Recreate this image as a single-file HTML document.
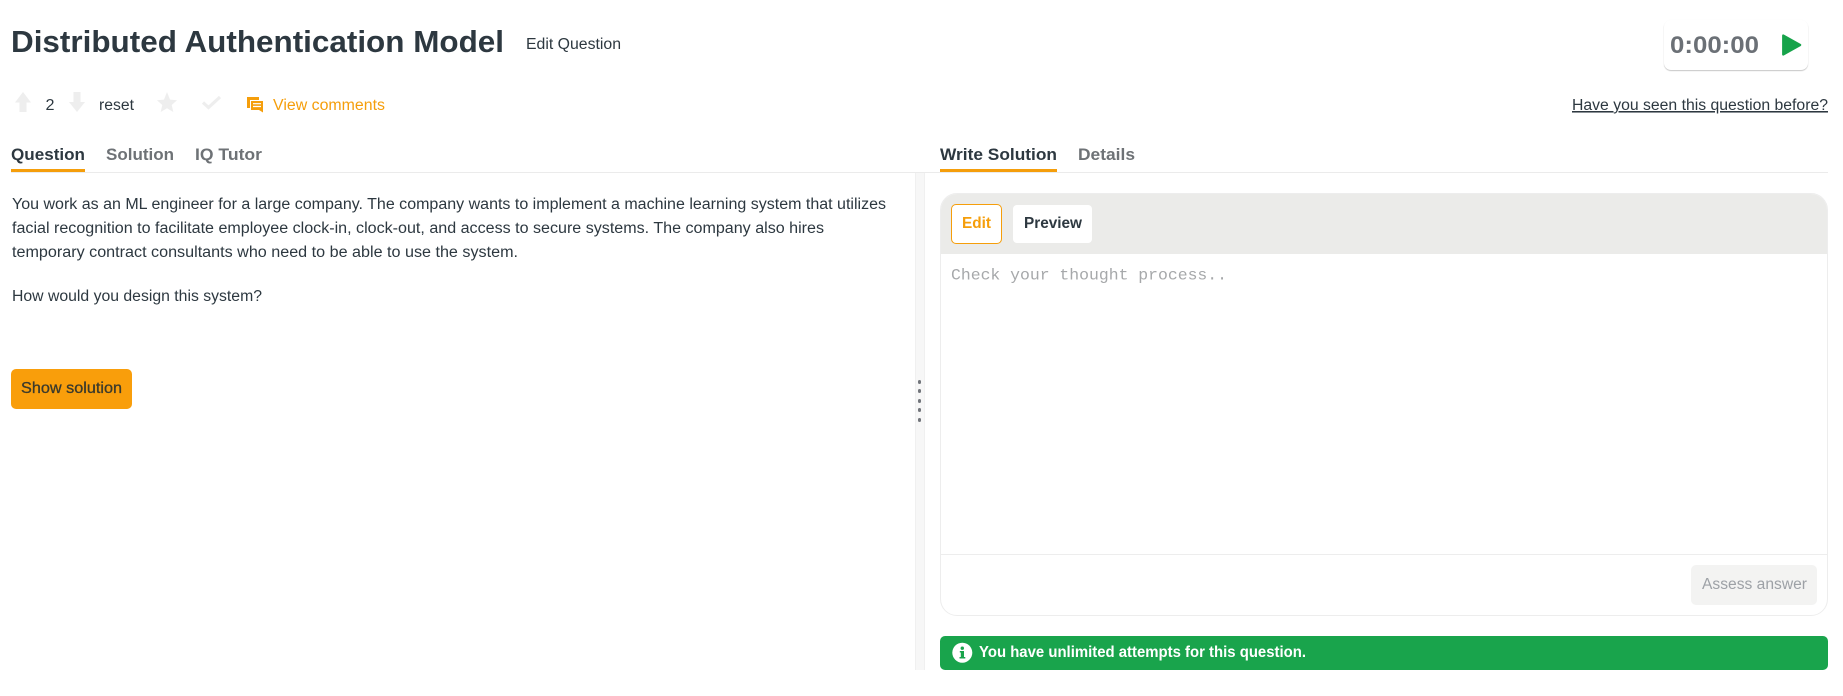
<!DOCTYPE html>
<html lang="en"><head><meta charset="utf-8"><title>Distributed Authentication Model</title>
<style>
html,body{margin:0;padding:0;background:#fff;width:1843px;height:696px;overflow:hidden}
.a{position:absolute;box-sizing:border-box}
.d{position:absolute;left:917.5px;width:3.5px;height:3.5px;border-radius:50%;background:#72757b}
svg.t{position:absolute;left:0;top:0}
svg.t text{font-family:"Liberation Sans",sans-serif;font-size:15.5px;fill:#2d3840}
</style></head><body>
<div class="a" style="left:1664px;top:20px;width:144px;height:50px;background:#fff;border-radius:7px;box-shadow:0 1px 1px rgba(0,0,0,.22),0 0 1px rgba(0,0,0,.03)"></div>
<div class="a" style="left:11px;top:172px;width:1817px;height:1px;background:#ebebeb"></div>
<div class="a" style="left:11px;top:169px;width:74px;height:3px;background:#f59e0b"></div>
<div class="a" style="left:940px;top:169px;width:117px;height:3px;background:#f59e0b"></div>
<div class="a" style="left:915px;top:173px;width:10px;height:497px;background:#f7f7f7;border-left:1px solid #f0f0f0;border-right:1px solid #f0f0f0"></div>
<div class="d" style="top:380px"></div>
<div class="d" style="top:389px"></div>
<div class="d" style="top:399px"></div>
<div class="d" style="top:408px"></div>
<div class="d" style="top:418px"></div>
<div class="a" style="left:11px;top:369px;width:121px;height:40px;background:#f99e0b;border-radius:5px"></div>
<div class="a" style="left:940px;top:193px;width:888px;height:423px;border:1px solid #ededed;border-radius:17px;overflow:hidden">
  <div class="a" style="left:0;top:0;width:886px;height:60px;background:#ebebe9"></div>
  <div class="a" style="left:0;top:360px;width:886px;height:1px;background:#ededed"></div>
</div>
<div class="a" style="left:951px;top:204px;width:51px;height:40px;background:#fff;border:1px solid #f59e0b;border-radius:5px"></div>
<div class="a" style="left:1013px;top:205px;width:79px;height:38px;background:#fff;border-radius:4px"></div>
<div class="a" style="left:1691px;top:565px;width:126px;height:40px;background:#f3f3f2;border-radius:5px"></div>
<div class="a" style="left:940px;top:636px;width:888px;height:34px;background:#19a44c;border-radius:5px"></div>
<svg class="t" width="1843" height="696" viewBox="0 0 1843 696">
<text x="11" y="52" style="font-size:31px;font-weight:700" textLength="493" lengthAdjust="spacingAndGlyphs">Distributed Authentication Model</text>
<text x="526" y="49" textLength="95" lengthAdjust="spacingAndGlyphs">Edit Question</text>
<text x="1670" y="53" style="font-size:24px;font-weight:700;fill:#6b7076" textLength="89" lengthAdjust="spacingAndGlyphs">0:00:00</text>
<polygon points="1783.2,35.5 1800.2,45 1783.2,54.5" fill="#16a34a" stroke="#16a34a" stroke-width="2.2" stroke-linejoin="round"/>
<path d="M23 92L31 102.500H26.500V112H19.500V102.500H15Z" fill="#eeeeee"/>
<text x="45.500" y="110" textLength="9" lengthAdjust="spacingAndGlyphs">2</text>
<path d="M73.500 92H80.500V102H85L77 112L69 102H73.500Z" fill="#eeeeee"/>
<text x="99" y="110" textLength="35" lengthAdjust="spacingAndGlyphs">reset</text>
<path d="M167 92L170 99.600L177 100.200L171.700 105L173.300 112L167 108.200L160.700 112L162.300 105L157 100.200L164 99.600Z" fill="#eeeeee"/>
<path d="M203 102.500L208.500 107.500L220 97" fill="none" stroke="#eeeeee" stroke-width="3.200"/>
<path d="M247 97H259V100H250V108H247Z" fill="#f59e0b"/>
<path d="M251 101H263V112.500L259 110H251Z" fill="#f59e0b"/>
<path d="M253 103.700H261M253 106.500H261" stroke="#fff" stroke-width="1.200"/>
<text x="273" y="110" style="fill:#f59e0b" textLength="112" lengthAdjust="spacingAndGlyphs">View comments</text>
<text x="1572" y="110" text-decoration="underline" textLength="256" lengthAdjust="spacingAndGlyphs">Have you seen this question before?</text>
<text x="11" y="160" style="font-size:16.500px;font-weight:700" textLength="74" lengthAdjust="spacingAndGlyphs">Question</text>
<text x="106" y="160" style="font-size:16.500px;font-weight:700;fill:#6e7276" textLength="68" lengthAdjust="spacingAndGlyphs">Solution</text>
<text x="195" y="160" style="font-size:16.500px;font-weight:700;fill:#6e7276" textLength="67" lengthAdjust="spacingAndGlyphs">IQ Tutor</text>
<text x="940" y="160" style="font-size:16.500px;font-weight:700" textLength="117" lengthAdjust="spacingAndGlyphs">Write Solution</text>
<text x="1078" y="160" style="font-size:16.500px;font-weight:700;fill:#6e7276" textLength="57" lengthAdjust="spacingAndGlyphs">Details</text>
<text x="12" y="209" textLength="874" lengthAdjust="spacingAndGlyphs">You work as an ML engineer for a large company. The company wants to implement a machine learning system that utilizes</text>
<text x="12" y="233" textLength="812" lengthAdjust="spacingAndGlyphs">facial recognition to facilitate employee clock-in, clock-out, and access to secure systems. The company also hires</text>
<text x="12" y="257" textLength="506" lengthAdjust="spacingAndGlyphs">temporary contract consultants who need to be able to use the system.</text>
<text x="12" y="301" textLength="250" lengthAdjust="spacingAndGlyphs">How would you design this system?</text>
<text x="21" y="393" style="fill:#3b3a2c;stroke:#3b3a2c;stroke-width:.3px" textLength="101" lengthAdjust="spacingAndGlyphs">Show solution</text>
<text x="962" y="228" style="font-weight:700;fill:#f59e0b" textLength="29" lengthAdjust="spacingAndGlyphs">Edit</text>
<text x="1024" y="228" style="font-weight:700" textLength="58" lengthAdjust="spacingAndGlyphs">Preview</text>
<text x="951" y="279.500" style="font-family:'Liberation Mono',monospace;font-size:16px;fill:#a6a8aa" textLength="276" lengthAdjust="spacingAndGlyphs">Check your thought process..</text>
<text x="1702" y="589" style="fill:#9da1a6" textLength="105" lengthAdjust="spacingAndGlyphs">Assess answer</text>
<circle cx="962.300" cy="652.700" r="10" fill="#fff"/>
<path d="M959.800 651H964V657H965.300V658.500H959.500V657H960.800V652.500H959.800Z" fill="#19a44c"/>
<circle cx="962.300" cy="648.200" r="1.700" fill="#19a44c"/>
<text x="979" y="657" style="font-weight:700;fill:#fff" textLength="327" lengthAdjust="spacingAndGlyphs">You have unlimited attempts for this question.</text>
</svg>
</body></html>
